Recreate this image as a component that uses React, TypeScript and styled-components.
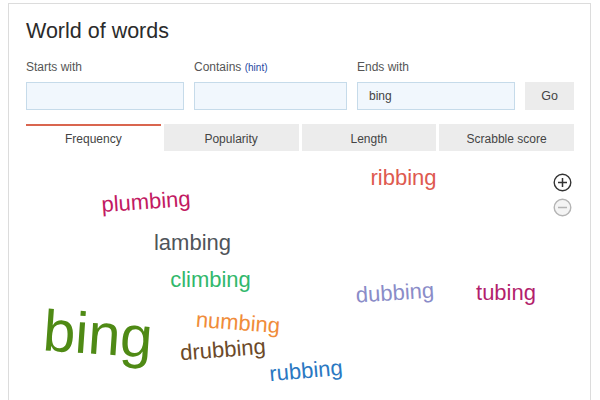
import styled, { createGlobalStyle } from 'styled-components';

const GlobalStyle = createGlobalStyle`
  html, body {
    margin: 0;
    padding: 0;
    background: #ffffff;
    font-family: "Liberation Sans", Arial, sans-serif;
  }
`;

type CloudWord = {
  text: string;
  x: number;
  y: number;
  size: number;
  rot: number;
  color: string;
};

// centres of each word, relative to the cloud area
const words: CloudWord[] = [
  { text: 'ribbing', x: 377.5, y: 27.4, size: 22, rot: 0, color: '#de5a50' },
  { text: 'plumbing', x: 120, y: 51.4, size: 22, rot: -4, color: '#c21a62' },
  { text: 'lambing', x: 166.5, y: 92.4, size: 22, rot: 0, color: '#4f545a' },
  { text: 'climbing', x: 184.5, y: 129.4, size: 22, rot: 0, color: '#31b86c' },
  { text: 'bing', x: 72, y: 183, size: 58, rot: 4, color: '#4f8a15' },
  { text: 'numbing', x: 211.5, y: 172, size: 22, rot: 4.5, color: '#f08c3a' },
  { text: 'drubbing', x: 197, y: 199.4, size: 22, rot: -4.5, color: '#6c4a29' },
  { text: 'rubbing', x: 279.5, y: 220.4, size: 22, rot: -5, color: '#2a78c2' },
  { text: 'dubbing', x: 369, y: 142, size: 22, rot: -3.5, color: '#8a8cc8' },
  { text: 'tubing', x: 480, y: 142.4, size: 22, rot: 0, color: '#b31f6d' },
];

const tabs = ['Frequency', 'Popularity', 'Length', 'Scrabble score'];

export default function App() {
  return (
    <>
      <GlobalStyle />
      <Card>
        <Title>World of words</Title>
        <SearchGrid>
          <Label>Starts with</Label>
          <Label>
            Contains <Hint>(hint)</Hint>
          </Label>
          <Label>Ends with</Label>
          <span />
          <Field />
          <Field />
          <Field value="bing" readOnly />
          <GoButton>Go</GoButton>
        </SearchGrid>
        <TabRow>
          {tabs.map((t, i) => (
            <Tab key={t} $active={i === 0}>
              {t}
            </Tab>
          ))}
        </TabRow>
        <Cloud>
          {words.map((w) => (
            <Word
              key={w.text}
              $size={w.size}
              $color={w.color}
              $rot={w.rot}
              style={{ left: w.x, top: w.y }}
            >
              {w.text}
            </Word>
          ))}
          <ZoomControls>
            <ZoomButton aria-label="Zoom in">
              <svg width="19" height="19" viewBox="0 0 19 19">
                <circle cx="9.5" cy="9.5" r="8.3" fill="none" stroke="#333" strokeWidth="1.4" />
                <path d="M5 9.5h9M9.5 5v9" stroke="#333" strokeWidth="1.5" />
              </svg>
            </ZoomButton>
            <ZoomButton aria-label="Zoom out">
              <svg width="19" height="19" viewBox="0 0 19 19">
                <circle cx="9.5" cy="9.5" r="8.3" fill="#f4f4f4" stroke="#b4b4b4" strokeWidth="1.4" />
                <path d="M5 9.5h9" stroke="#b4b4b4" strokeWidth="1.5" />
              </svg>
            </ZoomButton>
          </ZoomControls>
        </Cloud>
      </Card>
    </>
  );
}

const Card = styled.div`
  margin: 3px 0 0 8px;
  width: 548px;
  padding: 14px 16px 0 17px;
  border: 1px solid #dcdcdc;
  border-bottom: none;
  background: #fff;
`;

const Title = styled.h1`
  margin: 0;
  font-size: 21.5px;
  line-height: 26px;
  font-weight: normal;
  color: #2b2b2b;
`;

const SearchGrid = styled.div`
  display: grid;
  grid-template-columns: 158px 153px 158px 49px;
  column-gap: 10px;
  row-gap: 7px;
  margin-top: 16px;
`;

const Label = styled.div`
  font-size: 12px;
  line-height: 14px;
  color: #555;
  white-space: nowrap;
`;

const Hint = styled.span`
  font-size: 10px;
  color: #23479f;
`;

const Field = styled.input`
  box-sizing: border-box;
  height: 28px;
  width: 100%;
  margin: 0;
  padding: 0 11px;
  border: 1px solid #c6dbea;
  background: #f1f7fd;
  font-family: "Liberation Sans", Arial, sans-serif;
  font-size: 12px;
  color: #444;
  outline: none;
`;

const GoButton = styled.button`
  height: 28px;
  border: none;
  background: #ececec;
  font-family: "Liberation Sans", Arial, sans-serif;
  font-size: 12.5px;
  color: #444;
  padding: 0;
  cursor: pointer;
`;

const TabRow = styled.div`
  display: flex;
  gap: 3px;
  margin-top: 14px;
`;

const Tab = styled.div<{ $active: boolean }>`
  flex: 1;
  box-sizing: border-box;
  height: 27px;
  display: flex;
  align-items: center;
  justify-content: center;
  font-size: 12px;
  color: #444;
  background: ${(p) => (p.$active ? '#fff' : '#ececec')};
  border-top: 2px solid ${(p) => (p.$active ? '#d9654f' : 'transparent')};
`;

const Cloud = styled.div`
  position: relative;
  height: 250px;
`;

const Word = styled.span<{ $size: number; $color: string; $rot: number }>`
  position: absolute;
  white-space: nowrap;
  line-height: 1;
  font-size: ${(p) => p.$size}px;
  color: ${(p) => p.$color};
  transform: translate(-50%, -50%) rotate(${(p) => p.$rot}deg);
`;

const ZoomControls = styled.div`
  position: absolute;
  top: 22px;
  right: 2px;
  display: flex;
  flex-direction: column;
  gap: 6px;
`;

const ZoomButton = styled.div`
  width: 19px;
  height: 19px;
  cursor: pointer;
  svg {
    display: block;
  }
`;
